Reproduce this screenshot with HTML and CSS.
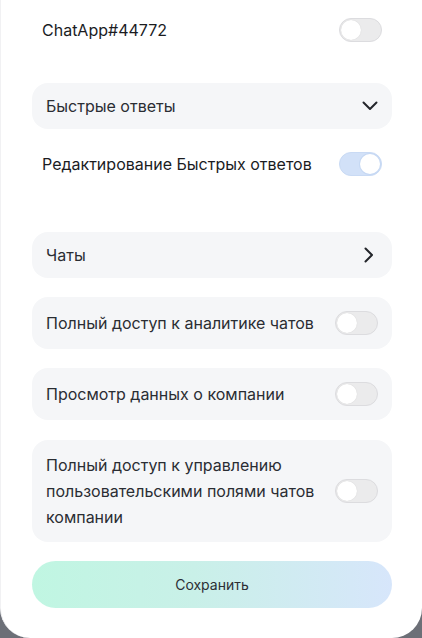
FILE: index.html
```html
<!DOCTYPE html>
<html lang="ru">
<head>
<meta charset="utf-8">
<title>Настройки доступа</title>
<link rel="stylesheet" href="styles.css">
</head>
<body>
<div class="sheet">
  <div class="row row-first">
    <span class="label">ChatApp#44772</span>
    <span class="toggle"><span class="knob"></span></span>
  </div>

  <div class="card card-short card-after-row">
    <span class="label">Быстрые ответы</span>
    <svg class="chev-down" width="16" height="10" viewBox="0 0 16 10"><path d="M1.5 1.5 L8 8 L14.5 1.5" fill="none" stroke="#23262b" stroke-width="2" stroke-linecap="round" stroke-linejoin="round"/></svg>
  </div>

  <div class="row row-second">
    <span class="label">Редактирование Быстрых ответов</span>
    <span class="toggle on"><span class="knob"></span></span>
  </div>

  <div class="card card-short card-chats">
    <span class="label">Чаты</span>
    <svg class="chev-right" width="10" height="16" viewBox="0 0 10 16"><path d="M1.5 1.5 L8 8 L1.5 14.5" fill="none" stroke="#23262b" stroke-width="2" stroke-linecap="round" stroke-linejoin="round"/></svg>
  </div>

  <div class="card card-toggle">
    <span class="label">Полный доступ к аналитике чатов</span>
    <span class="toggle"><span class="knob"></span></span>
  </div>

  <div class="card card-toggle">
    <span class="label">Просмотр данных о компании</span>
    <span class="toggle"><span class="knob"></span></span>
  </div>

  <div class="card card-toggle card-tall">
    <span class="label">Полный доступ к управлению пользовательскими полями чатов компании</span>
    <span class="toggle"><span class="knob"></span></span>
  </div>

  <button class="save">Сохранить</button>
</div>
</body>
</html>
```

FILE: styles.css
```css
* { box-sizing: border-box; }

html, body {
  margin: 0;
  padding: 0;
  background: #6c6f77;
  height: 638px;
  overflow: hidden;
}

body {
  font-family: Inter, "Noto Sans", "Liberation Sans", sans-serif;
}

.sheet {
  background: #ffffff;
  height: 638px;
  border-radius: 0 0 30px 30px;
  border-left: 1px solid #f1f1f3;
  padding: 18px 30px 0 31px;
  display: flex;
  flex-direction: column;
}

.row {
  display: flex;
  align-items: center;
  justify-content: space-between;
  padding: 0 10px;
  height: 24px;
}

.row .label {
  font-size: 16px;
  color: #1b1c1f;
}

.row-second { margin-top: 23px; }

.card {
  background: #f5f6f8;
  border-radius: 16px;
  display: flex;
  align-items: center;
  justify-content: space-between;
  padding: 0 14px;
}

.card .label {
  font-size: 16px;
  color: #2a2d33;
}

.card-short { height: 46px; }

.card-after-row { margin-top: 41px; }

.card-chats { margin-top: 56px; }

.card-toggle {
  height: 52px;
  margin-top: 19px;
}

.card-tall {
  height: 102px;
  margin-top: 20px;
}

.card-tall .label {
  line-height: 26px;
  max-width: 280px;
}

.chev-down { margin-right: 0; }
.chev-right { margin-right: 4px; }

.toggle {
  width: 43px;
  height: 24px;
  border-radius: 12px;
  background: #ebebec;
  border: 1px solid #dcdcdf;
  position: relative;
  flex: none;
}

.toggle .knob {
  position: absolute;
  top: 1px;
  left: 1px;
  width: 20px;
  height: 20px;
  border-radius: 50%;
  background: #ffffff;
  box-shadow: 0 0 1px rgba(0,0,0,0.15);
}

.toggle.on {
  background: #d2e1f8;
  border-color: #c9daf4;
}

.toggle.on .knob {
  left: auto;
  right: 1px;
  box-shadow: 0 0 0 1px #c6d8f3;
}

.save {
  margin-top: 19px;
  height: 47px;
  border: none;
  border-radius: 24px;
  background: linear-gradient(90deg, #c0f6e2 0%, #c9f0e8 45%, #d7e6fb 100%);
  font-family: Inter, "Noto Sans", "Liberation Sans", sans-serif;
  font-size: 14px;
  color: #2c2f35;
  padding: 0;
  width: 100%;
}
```
